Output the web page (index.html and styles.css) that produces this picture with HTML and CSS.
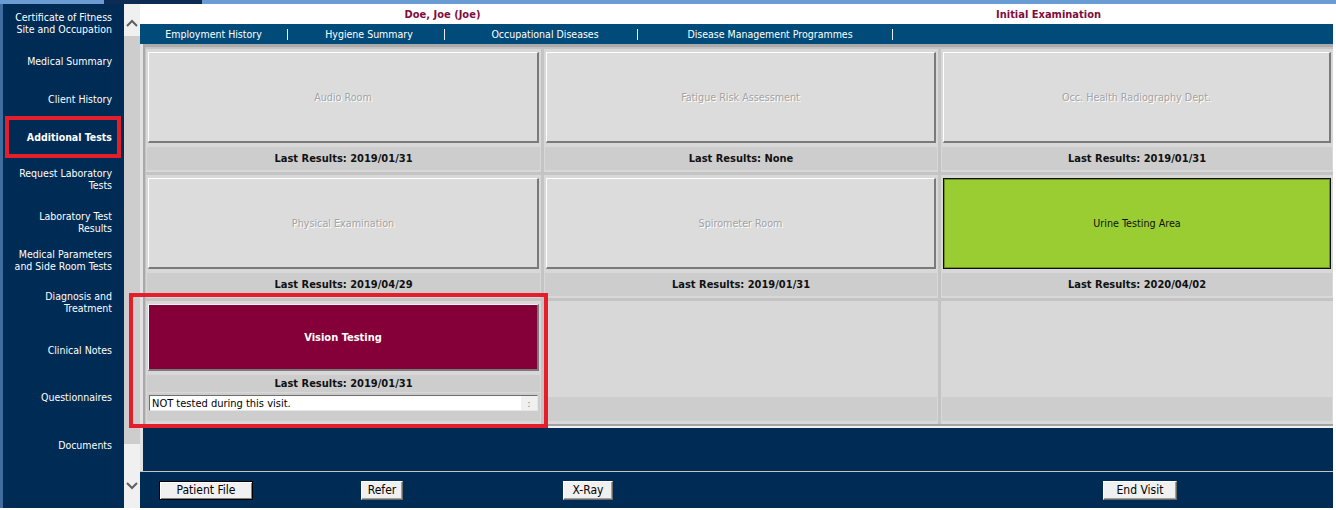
FILE: index.html
```html
<!DOCTYPE html>
<html lang="en">
<head>
<meta charset="utf-8">
<title>Additional Tests</title>
<link rel="stylesheet" href="styles.css">
</head>
<body>
<div class="topstrip"><span class="ts-a"></span><span class="ts-b"></span><span class="ts-c"></span></div>
<div class="app">
  <nav class="sidebar">
    <a class="side-item">Certificate of Fitness<br>Site and Occupation</a>
    <a class="side-item">Medical Summary</a>
    <a class="side-item">Client History</a>
    <a class="side-item active">Additional Tests</a>
    <a class="side-item">Request Laboratory<br>Tests</a>
    <a class="side-item">Laboratory Test<br>Results</a>
    <a class="side-item">Medical Parameters<br>and Side Room Tests</a>
    <a class="side-item">Diagnosis and<br>Treatment</a>
    <a class="side-item">Clinical Notes</a>
    <a class="side-item">Questionnaires</a>
    <a class="side-item">Documents</a>
  </nav>
  <div class="scrollbar">
    <div class="sb-btn sb-up"><svg width="12" height="8" viewBox="0 0 12 8"><polyline points="1,7 6,2 11,7" fill="none" stroke="#5f5f5f" stroke-width="2"/></svg></div>
    <div class="sb-track"></div>
    <div class="sb-btn sb-down"><svg width="12" height="8" viewBox="0 0 12 8"><polyline points="1,1 6,6 11,1" fill="none" stroke="#5f5f5f" stroke-width="2"/></svg></div>
  </div>
  <main class="main">
    <header class="titlebar">
      <span class="title">Doe, Joe (Joe)</span>
      <span class="title title-right">Initial Examination</span>
    </header>
    <div class="tabs">
      <span class="tab t1">Employment History</span><span class="tab-sep"></span>
      <span class="tab t2">Hygiene Summary</span><span class="tab-sep"></span>
      <span class="tab t3">Occupational Diseases</span><span class="tab-sep"></span>
      <span class="tab t4">Disease Management Programmes</span><span class="tab-sep"></span>
    </div>
    <div class="board">
      <div class="grid">
        <div class="cell">
          <div class="room disabled">Audio Room</div>
          <div class="band">Last Results: 2019/01/31</div>
        </div>
        <div class="cell">
          <div class="room disabled">Fatigue Risk Assessment</div>
          <div class="band">Last Results: None</div>
        </div>
        <div class="cell">
          <div class="room disabled">Occ. Health Radiography Dept.</div>
          <div class="band">Last Results: 2019/01/31</div>
        </div>
        <div class="cell">
          <div class="room disabled">Physical Examination</div>
          <div class="band">Last Results: 2019/04/29</div>
        </div>
        <div class="cell">
          <div class="room disabled">Spirometer Room</div>
          <div class="band">Last Results: 2019/01/31</div>
        </div>
        <div class="cell">
          <div class="room green">Urine Testing Area</div>
          <div class="band">Last Results: 2020/04/02</div>
        </div>
        <div class="cell cell-vision">
          <div class="room short maroon">Vision Testing</div>
          <div class="band band-short">Last Results: 2019/01/31</div>
          <div class="notes">
            <div class="note-input"><span class="note-text">NOT tested during this visit.</span><span class="spin">:</span></div>
          </div>
          <div class="highlight"></div>
        </div>
        <div class="cell cell-empty"><div class="band band-empty"></div></div>
        <div class="cell cell-empty"><div class="band band-empty"></div></div>
      </div>
      <div class="spacer"></div>
    </div>
    <div class="footer">
      <button class="btn default">Patient File</button>
      <button class="btn w-refer">Refer</button>
      <button class="btn w-xray">X-Ray</button>
      <button class="btn w-end">End Visit</button>
    </div>
  </main>
</div>
<div class="bottomline"></div>
</body>
</html>
```
FILE: styles.css
```css
* { box-sizing: border-box; }
html, body { margin: 0; padding: 0; }
body {
  width: 1336px;
  height: 510px;
  overflow: hidden;
  background: #ffffff;
  font-family: "DejaVu Sans Condensed", "DejaVu Sans", sans-serif;
  font-size: 11px;
  color: #000;
}

.topstrip { display: flex; height: 4px; }
.ts-a { width: 104px; background: #6a9bd2; }
.ts-b { width: 98px; background: #0b2b52; }
.ts-c { flex: 1; background: #6a9bd2; }

.app { display: flex; height: 504px; }

/* sidebar */
.sidebar {
  width: 124px;
  background: #002b55;
  border-left: 3px solid #3f6d9f;
  display: grid;
  grid-template-rows: 38px 38px 38px 38px 46px 39px 37px 48px 48px 46px 50px;
  align-content: start;
}
.side-item {
  display: flex;
  align-items: center;
  justify-content: flex-end;
  text-align: right;
  padding-right: 12px;
  color: #ffffff;
  font-size: 10.5px;
  line-height: 12px;
}
.side-item.active {
  font-weight: bold;
  margin: -2px 3px -2px 2px;
  border: 4px solid #e41e2b;
  padding-right: 5px;
}

/* scrollbar */
.scrollbar {
  width: 16px;
  display: flex;
  flex-direction: column;
  background: #cdcdcd;
}
.sb-btn { background: #f0f0f0; display: flex; justify-content: center; }
.sb-up { height: 32px; padding-top: 15px; }
.sb-track { flex: 1; }
.sb-down { height: 64px; padding-top: 38px; }

/* main */
.main { width: 1193px; display: flex; flex-direction: column; }

.titlebar {
  height: 20px;
  display: grid;
  grid-template-columns: 605px 1fr;
  align-items: center;
  background: #ffffff;
}
.title {
  text-align: center;
  color: #7f0d3d;
  font-weight: bold;
  font-size: 11px;
}
.title-right { padding-left: 19px; }

.tabs {
  height: 20px;
  background: #004b7a;
  display: flex;
  align-items: center;
}
.tab { color: #ffffff; text-align: center; font-size: 10.5px; }
.t1 { width: 147px; }
.t2 { width: 156px; padding-left: 6px; }
.t3 { width: 192px; padding-left: 8px; }
.t4 { width: 254px; padding-left: 10px; }
.tab-sep { width: 1px; height: 11px; background: #e8eef4; }

/* board */
.board {
  height: 428px;
  background: #e2e2e2;
  padding-left: 3px;
  border-bottom: 1px solid #c4c4c4;
  display: flex;
  flex-direction: column;
}
.grid {
  display: grid;
  grid-template-columns: 395px 394px 1fr;
  grid-template-rows: 123px 123px 123px;
  gap: 3px;
  background: #c4c4c4;
  border-top: 3px solid #ababab;
  border-left: 2px solid #a9a9a9;
  border-bottom: 2px solid #a2a2a2;
  padding: 2px 0 0 1px;
}
.cell {
  background: #d8d8d8;
  padding: 3px 2px 2px 2px;
  display: flex;
  flex-direction: column;
  position: relative;
}
.room {
  height: 91px;
  display: flex;
  align-items: center;
  justify-content: center;
  font-size: 10.7px;
  border-style: solid;
  border-width: 1px 2px 2px 1px;
  border-color: #ffffff #7a7a7a #7a7a7a #ffffff;
}
.room.short { height: 67px; }
.disabled {
  background: #dcdcdc;
  color: #a3a3a3;
  text-shadow: 1px 1px 0 #ffffff;
}
.green {
  background: #9acd32;
  color: #111;
  border: 1px solid #0f0f0f;
  box-shadow: inset 1px 1px 0 #6b8e23, inset -1px -1px 0 #6b8e23;
}
.maroon {
  background: #850038;
  color: #ffffff;
  font-weight: bold;
  font-size: 11px;
  border-color: #f4f4f4 #7a7a7a #7a7a7a #f4f4f4;
}
.band {
  height: 23px;
  margin: 4px -1px 0 -1px;
  background: #cdcdcd;
  display: flex;
  align-items: center;
  justify-content: center;
  font-weight: bold;
  font-size: 11px;
  color: #111;
}
.band-short { height: 17px; }
.notes {
  margin: 1px -1px 0 -1px;
  height: 28px;
  background: #cdcdcd;
  padding: 2px 2px 0 2px;
}
.note-input {
  height: 16px;
  background: #ffffff;
  border-style: solid;
  border-width: 1px;
  border-color: #6d6d6d #e6e6e6 #e6e6e6 #6d6d6d;
  display: flex;
  align-items: center;
}
.note-text { flex: 1; padding-left: 2px; font-size: 11px; color: #000; }
.spin {
  width: 16px;
  height: 100%;
  background: #f0f0f0;
  color: #8a8a8a;
  font-size: 11px;
  display: flex;
  align-items: center;
  justify-content: center;
}
.cell-empty { justify-content: flex-end; }
.band-empty { height: 24px; margin-bottom: 1px; }

.highlight {
  position: absolute;
  left: -17px;
  right: -7px;
  top: -8px;
  bottom: -4px;
  border: 4px solid #e41e2b;
  pointer-events: none;
  z-index: 5;
}

.spacer {
  flex: 1;
  background: #002b55;
  border-top: 2px solid #f0f0f0;
}

/* footer */
.footer {
  flex: 1;
  background: #002b55;
  display: grid;
  grid-template-columns: 202px 202px 540px auto;
  justify-items: start;
  align-items: start;
  padding: 9px 0 0 19px;
}
.btn {
  font-family: "DejaVu Sans Condensed", "DejaVu Sans", sans-serif;
  font-size: 12px;
  height: 19px;
  padding: 0;
  background: #f0f0f0;
  color: #000;
  border: 1px solid;
  border-color: #ffffff #696969 #696969 #ffffff;
  box-shadow: inset -1px -1px 0 #a0a0a0;
  line-height: 15px;
  text-align: center;
}
.btn.default {
  width: 94px;
  border-color: #000;
  box-shadow: inset 1px 1px 0 #ffffff, inset -1px -1px 0 #808080;
}
.w-refer { width: 42px; }
.w-xray { width: 50px; }
.w-end { width: 74px; }

.bottomline { height: 2px; background: #ffffff; }
```
